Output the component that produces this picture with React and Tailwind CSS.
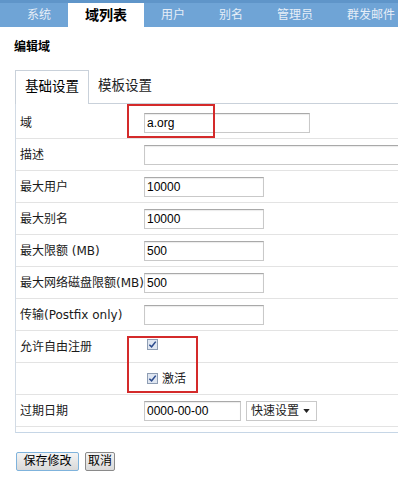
import React from "react";

const navItems = ["系统", "域列表", "用户", "别名", "管理员", "群发邮件"];

function Check() {
  return (
    <span className="inline-flex h-[11px] w-[11px] items-center justify-center border border-[#8e9db3] bg-[#dfe6f1]">
      <svg viewBox="0 0 10 10" className="h-[9px] w-[9px]">
        <path d="M1.5 5.2 L4 7.6 L8.6 1.8" fill="none" stroke="#2b4a8c" strokeWidth="1.7" />
      </svg>
    </span>
  );
}

function Input({ value = "", w = "w-[120px]" }) {
  return (
    <div className={`h-[20px] ${w} border border-[#c9c9c9] border-t-[#a9a9a9] bg-white px-[2px] text-[12px] leading-[18px] text-black shadow-[inset_0_1px_1px_rgba(0,0,0,0.08)]`}>
      {value}
    </div>
  );
}

function Row({ label, children }) {
  return (
    <div className="flex h-[32px] items-center border-b border-[#e3e3e3]">
      <div className="w-[128px] whitespace-nowrap pl-[4px] font-['DejaVu_Sans','Noto_Sans_CJK_SC',sans-serif] text-[12px] text-[#1a1a1a]">
        {label}
      </div>
      <div className="flex items-center gap-[5px]">{children}</div>
    </div>
  );
}

export default function App() {
  return (
    <div className="relative h-[480px] w-[398px] overflow-hidden bg-white font-['Liberation_Sans','Noto_Sans_CJK_SC',sans-serif] text-[#222]">
      {/* top nav */}
      <div className="flex h-[27px] items-end bg-[#6fa4d6] pl-[10px] shadow-[inset_0_3px_0_#5f95c9]">
        {navItems.map((n, i) =>
          i === 1 ? (
            <div key={n} className="flex h-[24px] shrink-0 items-center whitespace-nowrap bg-white px-[17px] text-[14px] font-bold text-black">
              {n}
            </div>
          ) : (
            <div key={n} className="flex h-[24px] shrink-0 items-center whitespace-nowrap px-[17px] text-[12px] text-[#e6eef8]">
              {n}
            </div>
          )
        )}
      </div>

      <div className="mt-[12px] pl-[14px] text-[12px] font-bold leading-[16px] text-black">编辑域</div>

      {/* tabs */}
      <div className="ml-[15px] mt-[15px] flex h-[33px] items-end">
        <div className="relative z-10 -mb-px flex h-[34px] w-[74px] items-center justify-center border border-b-0 border-[#c9d1da] bg-white text-[13.5px] text-black">
          基础设置
        </div>
        <div className="flex h-[33px] items-center pl-[9px] text-[13.5px] text-[#222]">模板设置</div>
      </div>

      {/* panel */}
      <div className="ml-[15px] w-[420px] border-l border-t border-b border-l-[#d2dbe5] border-t-[#c9d1da] border-b-[#c6d6e6] pb-[5px] pt-[3px]">
        <Row label="域">
          <Input value="a.org" w="w-[166px]" />
        </Row>
        <Row label="描述">
          <Input w="w-[270px]" />
        </Row>
        <Row label="最大用户">
          <Input value="10000" />
        </Row>
        <Row label="最大别名">
          <Input value="10000" />
        </Row>
        <Row label="最大限额 (MB)">
          <Input value="500" />
        </Row>
        <Row label="最大网络磁盘限额(MB)">
          <Input value="500" />
        </Row>
        <Row label="传输(Postfix only)">
          <Input />
        </Row>
        <Row label="允许自由注册">
          <span className="ml-[3px] mb-[6px]">
            <Check />
          </span>
        </Row>
        <Row label="">
          <span className="ml-[3px] flex items-center gap-[4px] text-[12px]">
            <Check />
            激活
          </span>
        </Row>
        <Row label="过期日期">
          <Input value="0000-00-00" w="w-[97px]" />
          <div className="flex h-[20px] w-[71px] items-center justify-between border border-[#c9c9c9] bg-white pl-[4px] pr-[6px] text-[12px]">
            快速设置
            <svg viewBox="0 0 8 5" className="h-[4px] w-[7px]">
              <path d="M0 0 H8 L4 5 Z" fill="#222" />
            </svg>
          </div>
        </Row>
      </div>

      {/* buttons */}
      <div className="ml-[16px] mt-[19px] flex gap-[6px]">
        <button className="h-[19px] w-[63px] rounded-[2px] border border-[#7fb3dc] bg-gradient-to-b from-[#f4f4f4] to-[#d9d9d9] text-[12px] leading-[17px] text-black">
          保存修改
        </button>
        <button className="h-[19px] w-[30px] rounded-[2px] border border-[#8a8a8a] bg-gradient-to-b from-[#f4f4f4] to-[#d9d9d9] text-[12px] leading-[17px] text-black">
          取消
        </button>
      </div>

      {/* red annotation boxes */}
      <div className="absolute left-[127px] top-[104px] h-[34px] w-[88px] border-2 border-[#d42a2a]" />
      <div className="absolute left-[127px] top-[336px] h-[57px] w-[71px] border-2 border-[#d42a2a]" />
    </div>
  );
}
